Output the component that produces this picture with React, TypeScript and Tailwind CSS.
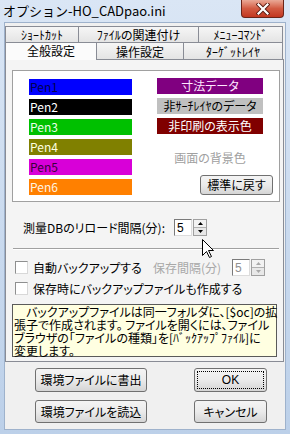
import React from "react";

function Btn({ children, className }: { children: React.ReactNode; className: string }) {
  return (
    <div
      className={`flex items-center justify-center rounded-[3px] border border-[#707070] bg-gradient-to-b from-[#f4f4f4] via-[#ebebeb] to-[#d5d5d5] ${className}`}
    >
      {children}
    </div>
  );
}

function Spin({ disabled }: { disabled?: boolean }) {
  const arrow = disabled ? "#a8a8a8" : "#000000";
  return (
    <div className="flex h-[17px]">
      <div
        className={`flex h-full w-[18px] items-center border border-[#7a7a7a] border-b-[#dcdcdc] border-r-[#dcdcdc] bg-white pl-[2px] font-['Liberation_Sans',sans-serif] text-[12px] leading-none ${
          disabled ? "text-[#909090]" : "text-black"
        }`}
      >
        5
      </div>
      <div className="ml-[1px] flex h-full w-[14px] flex-col border border-[#a0a0a0]">
        <div className="flex flex-1 items-center justify-center border-b border-[#b0b0b0] bg-[#f2f2f2]">
          <svg width="5" height="3" viewBox="0 0 5 3">
            <path d="M2.5 0 L5 3 L0 3Z" fill={arrow} />
          </svg>
        </div>
        <div className="flex flex-1 items-center justify-center bg-[#e8e8e8]">
          <svg width="5" height="3" viewBox="0 0 5 3">
            <path d="M0 0 L5 0 L2.5 3Z" fill={arrow} />
          </svg>
        </div>
      </div>
    </div>
  );
}

function Check() {
  return <div className="h-[13px] w-[13px] shrink-0 border border-[#8e8f8f] border-b-[#d8d8d8] border-r-[#d8d8d8] bg-white" />;
}

const pens = [
  { label: "Pen1", bg: "bg-[#0000ff]", fg: "text-[#000050]" },
  { label: "Pen2", bg: "bg-[#000000]", fg: "text-white" },
  { label: "Pen3", bg: "bg-[#00c000]", fg: "text-[#eaffea]" },
  { label: "Pen4", bg: "bg-[#808000]", fg: "text-[#ffffe0]" },
  { label: "Pen5", bg: "bg-[#d800d8]", fg: "text-[#3a003a]" },
  { label: "Pen6", bg: "bg-[#ff8000]", fg: "text-[#fff4e0]" },
];

export default function App() {
  return (
    <div className="relative flex h-[434px] w-[290px] flex-col overflow-hidden bg-gradient-to-b from-[#dae6f5] to-[#bcd0e9] font-['Noto_Sans_CJK_JP',sans-serif] text-[12px] text-black [font-feature-settings:'palt']">
      {/* title bar */}
      <div className="flex h-[22px] shrink-0 items-start justify-between">
        <span className="pl-[3px] pt-[1px] text-[13px] leading-[20px] [font-feature-settings:normal]">オプション-HO_CADpao.ini</span>
        <div className="mr-[6px] flex h-[18px] w-[43px] items-center justify-center rounded-b-[4px] border border-t-0 border-[#6b2418] bg-gradient-to-b from-[#e9a896] via-[#d25a42] to-[#c2361f]">
          <svg width="14" height="12" viewBox="0 0 14 12">
            <path d="M2.5 1.5 L11.5 10.5 M11.5 1.5 L2.5 10.5" stroke="#5a1a10" strokeWidth="4" strokeLinecap="square" />
            <path d="M2.5 1.5 L11.5 10.5 M11.5 1.5 L2.5 10.5" stroke="#ffffff" strokeWidth="2.2" strokeLinecap="square" />
          </svg>
        </div>
      </div>

      {/* client area */}
      <div className="mx-[4px] mb-[4px] flex flex-1 flex-col border border-[#9eb2cc] bg-[#f0f0f0]">
        {/* tab control */}
        <div className="ml-[0px] mt-[3px] w-[279px]">
          {/* back row */}
          <div className="flex h-[16px]">
            <div className="flex w-[74px] items-center justify-center border border-b-0 border-[#898c95] bg-gradient-to-b from-[#f6f6f6] to-[#e4e4e4] leading-[14px]">
              ｼｮｰﾄｶｯﾄ
            </div>
            <div className="flex w-[120px] items-center justify-center border border-b-0 border-l-0 border-[#898c95] bg-gradient-to-b from-[#f6f6f6] to-[#e4e4e4] leading-[14px]">
              ﾌｧｲﾙの関連付け
            </div>
            <div className="flex w-[84px] items-center justify-center border border-b-0 border-l-0 border-[#898c95] bg-gradient-to-b from-[#f6f6f6] to-[#e4e4e4] leading-[14px]">
              ﾒﾆｭｰｺﾏﾝﾄﾞ
            </div>
          </div>
          {/* front row */}
          <div className="flex h-[17px]">
            <div className="z-10 -mb-[1px] flex w-[92px] items-center justify-center border border-b-0 border-[#898c95] bg-[#fbfbfb] pb-[1px] leading-[14px]">
              全般設定
            </div>
            <div className="flex w-[87px] items-center justify-center border border-b-0 border-l-0 border-[#898c95] bg-gradient-to-b from-[#f6f6f6] to-[#e4e4e4] pt-[2px] leading-[14px]">
              操作設定
            </div>
            <div className="flex w-[99px] items-center justify-center border border-b-0 border-l-0 border-[#898c95] bg-gradient-to-b from-[#f6f6f6] to-[#e4e4e4] pt-[2px] leading-[14px]">
              ﾀｰｹﾞｯﾄﾚｲﾔ
            </div>
          </div>

          {/* panel */}
          <div className="flex h-[303px] w-[279px] flex-col border border-[#898c95] bg-[#f4f4f4]">
            {/* colour box */}
            <div className="ml-[6px] mt-[10px] flex h-[132px] w-[268px] border border-[#a0a0a0] bg-white">
              <div className="ml-[16px] mt-[8px] flex w-[103px] flex-col gap-[4px]">
                {pens.map((p) => (
                  <div key={p.label} className={`flex h-[16px] items-center pl-[1px] leading-[14px] ${p.bg} ${p.fg}`}>
                    {p.label}
                  </div>
                ))}
              </div>
              <div className="ml-[25px] mt-[7px] flex w-[116px] flex-col">
                <div className="flex w-[106px] flex-col gap-[4px]">
                  <div className="flex h-[16px] items-center justify-center bg-[#800080] leading-[14px] text-[#ffe8ff]">寸法データ</div>
                  <div className="flex h-[16px] items-center justify-center bg-[#c0c0c0] leading-[14px] text-black">非ｻｰﾁﾚｲﾔのデータ</div>
                  <div className="flex h-[16px] items-center justify-center bg-[#800000] leading-[14px] text-white">非印刷の表示色</div>
                  <div className="mt-[12px] text-center leading-[16px] text-[#a0a0a0]">画面の背景色</div>
                </div>
                <Btn className="mt-[9px] h-[20px] w-[73px] self-end">標準に戻す</Btn>
              </div>
            </div>

            {/* reload interval */}
            <div className="ml-[17px] mt-[17px] flex h-[17px] items-center">
              <span className="w-[151px] leading-[14px]">測量DBのリロード間隔(分):</span>
              <Spin />
            </div>

            {/* separator */}
            <div className="ml-[7px] mt-[12px] h-[2px] w-[266px] border-t border-b border-t-[#a0a0a0] border-b-white" />

            {/* auto backup */}
            <div className="ml-[9px] mt-[9px] flex h-[17px] items-center">
              <Check />
              <span className="ml-[5px] w-[120px] leading-[14px]">自動バックアップする</span>
              <span className="w-[79px] leading-[14px] text-[#a8a8a8]">保存間隔(分)</span>
              <Spin disabled />
            </div>

            <div className="ml-[9px] mt-[5px] flex h-[15px] items-center">
              <Check />
              <span className="ml-[5px] leading-[14px]">保存時にバックアップファイルも作成する</span>
            </div>

            {/* info */}
            <div className="ml-[6px] mt-[8px] h-[53px] w-[265px] whitespace-nowrap border border-[#5a5a5a] bg-[#ffffe1] pl-[1px] leading-[13px]">
              <div>　バックアップファイルは同一フォルダに、[$oc]の拡</div>
              <div>張子で作成されます。 ファイルを開くには、ファイル</div>
              <div>ブラウザの「ファイルの種類」を[ﾊﾞｯｸｱｯﾌﾟﾌｧｲﾙ]に</div>
              <div>変更します。</div>
            </div>
          </div>
        </div>

        {/* bottom buttons */}
        <div className="ml-[30px] mt-[6px] flex h-[24px] gap-[47px]">
          <Btn className="h-[24px] w-[112px]">環境ファイルに書出</Btn>
          <Btn className="h-[24px] w-[73px] border-[#3c3c3c]">
            <div className="flex h-[18px] w-[67px] items-center justify-center border border-dotted border-black font-['Liberation_Sans',sans-serif]">
              OK
            </div>
          </Btn>
        </div>
        <div className="ml-[30px] mt-[8px] flex h-[23px] gap-[47px]">
          <Btn className="h-[23px] w-[112px]">環境ファイルを読込</Btn>
          <Btn className="h-[23px] w-[73px]">キャンセル</Btn>
        </div>
      </div>

      {/* mouse pointer */}
      <svg className="absolute left-[202px] top-[239px]" width="13" height="20" viewBox="0 0 13 20">
        <path d="M0.5 0.5 L0.5 16.5 L4.5 12.5 L7.5 18.5 L9.5 17.5 L6.5 11.5 L11.5 11.5 Z" fill="#ffffff" stroke="#000000" strokeWidth="1" strokeLinejoin="miter" />
      </svg>
    </div>
  );
}
